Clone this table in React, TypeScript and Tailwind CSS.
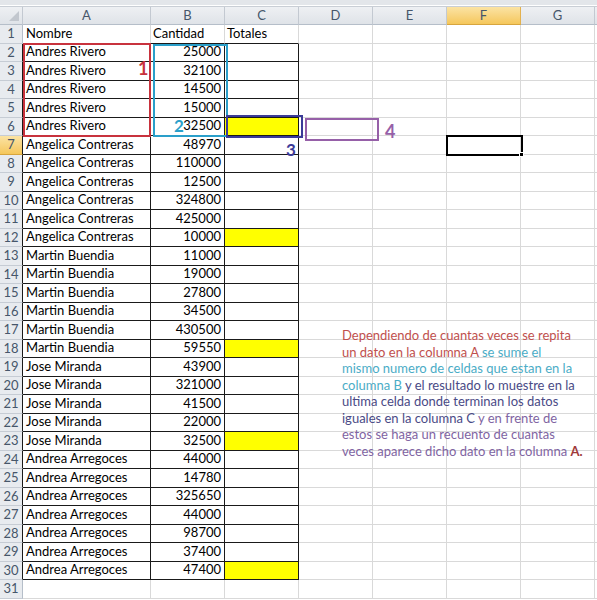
import React from "react";

const data: [string, number][] = [
  ["Andres Rivero", 25000],
  ["Andres Rivero", 32100],
  ["Andres Rivero", 14500],
  ["Andres Rivero", 15000],
  ["Andres Rivero", 32500],
  ["Angelica Contreras", 48970],
  ["Angelica Contreras", 110000],
  ["Angelica Contreras", 12500],
  ["Angelica Contreras", 324800],
  ["Angelica Contreras", 425000],
  ["Angelica Contreras", 10000],
  ["Martin Buendia", 11000],
  ["Martin Buendia", 19000],
  ["Martin Buendia", 27800],
  ["Martin Buendia", 34500],
  ["Martin Buendia", 430500],
  ["Martin Buendia", 59550],
  ["Jose Miranda", 43900],
  ["Jose Miranda", 321000],
  ["Jose Miranda", 41500],
  ["Jose Miranda", 22000],
  ["Jose Miranda", 32500],
  ["Andrea Arregoces", 44000],
  ["Andrea Arregoces", 14780],
  ["Andrea Arregoces", 325650],
  ["Andrea Arregoces", 44000],
  ["Andrea Arregoces", 98700],
  ["Andrea Arregoces", 37400],
  ["Andrea Arregoces", 47400],
];

const yellow = new Set([6, 12, 18, 23, 30]);
const cols = ["A", "B", "C", "D", "E", "F", "G"];

function HeaderRow() {
  return (
    <>
      <div className="flex items-end justify-end pr-[3px] pb-[3px] border-r border-b border-r-[#c3c9d1] border-b-[#b5bec9] bg-linear-to-b from-[#eef0f3] to-[#dfe3e8]">
        <svg width="10" height="10" viewBox="0 0 10 10">
          <polygon points="10,0 10,10 0,10" fill="#c2c7ce" />
        </svg>
      </div>
      {cols.map((c) => (
        <div
          key={c}
          className={
            "flex items-center justify-center border-r border-b text-[13px] text-[#46566a] " +
            (c === "F"
              ? "bg-linear-to-b from-[#fbe3a3] to-[#f5c75a] border-r-[#e3b14f] border-b-[#d7a53e]"
              : "bg-linear-to-b from-[#eef0f3] to-[#dfe3e8] border-r-[#c3c9d1] border-b-[#b5bec9]")
          }
        >
          {c}
        </div>
      ))}
      <div className="border-b border-b-[#b5bec9] bg-linear-to-b from-[#eef0f3] to-[#dfe3e8]" />
    </>
  );
}

function DataRow({ r }: { r: number }) {
  const inData = r >= 2 && r <= 30;
  const item = inData ? data[r - 2] : null;
  const gray = "border-r-[#d9d9d9] border-b-[#d9d9d9]";
  const abcBorder = inData
    ? "border-r-[#1a1a1a] border-b-[#1a1a1a]"
    : r === 1
    ? "border-r-[#d9d9d9] border-b-[#1a1a1a]"
    : gray;
  const active = r === 7;
  const txt = "flex items-end pb-[2px] border-r border-b whitespace-nowrap text-[13px] leading-[15px] text-black ";
  return (
    <>
      <div
        className={
          "flex items-center justify-center border-r border-b text-[13px] text-[#46566a] " +
          (active
            ? "bg-linear-to-b from-[#fbe3a3] to-[#f5c75a] border-b-[#d7a53e] "
            : "bg-[#e8ebef] border-b-[#c6ccd4] ") +
          (inData ? "border-r-[#1a1a1a]" : "border-r-[#b5bec9]")
        }
      >
        {r}
      </div>
      <div className={txt + "pl-[3px] " + abcBorder}>
        {r === 1 ? "Nombre" : item ? item[0] : ""}
      </div>
      <div className={txt + (r === 1 ? "pl-[2px] justify-start " : "pr-[3px] justify-end ") + abcBorder}>
        {r === 1 ? "Cantidad" : item ? String(item[1]) : ""}
      </div>
      <div className={txt + "pl-[2px] " + abcBorder + (yellow.has(r) ? " bg-[#ffff00]" : "")}>
        {r === 1 ? "Totales" : ""}
      </div>
      {[0, 1, 2, 3].map((i) => (
        <div key={i} className={"border-r border-b " + gray} />
      ))}
      <div className="border-b border-b-[#d9d9d9]" />
    </>
  );
}

export default function App() {
  const rows = Array.from({ length: 31 }, (_, i) => i + 1);
  return (
    <div className="relative w-[597px] h-[600px] overflow-hidden bg-white font-['Lato',sans-serif]">
      <div className="h-[5px] bg-[#e3e6ea]" />
      <div className="h-[1px] bg-white" />
      <div className="h-[1px] bg-[#c9ced5]" />
      <div className="grid grid-cols-[23px_128px_74px_74px_74px_74px_74px_74px_1fr] grid-rows-[18px_repeat(31,18.5px)]">
        <HeaderRow />
        {rows.map((r) => (
          <DataRow key={r} r={r} />
        ))}
      </div>

      {/* annotation shapes drawn over the sheet */}
      <div className="absolute left-[23px] top-[43px] w-[128px] h-[94px] border-2 border-[#c8323d]" />
      <div className="absolute left-[138px] top-[58px] text-[18px] leading-[20px] font-bold text-[#c8323d]">1</div>

      <div className="absolute left-[153px] top-[44px] w-[75px] h-[93px] border-2 border-[#2a9fca]" />
      <div className="absolute left-[174px] top-[116px] text-[17px] leading-[20px] font-bold text-[#2a9fca]">2</div>

      <div className="absolute left-[226px] top-[115px] w-[77px] h-[23px] border-2 border-[#3b3b98]" />
      <div className="absolute left-[286px] top-[140px] text-[17px] leading-[20px] font-bold text-[#3b3b98]">3</div>

      <div className="absolute left-[305px] top-[118px] w-[74px] h-[23px] border-2 border-[#9660a8]" />
      <div className="absolute left-[385px] top-[121px] text-[18px] leading-[20px] font-bold text-[#9660a8]">4</div>

      {/* active cell */}
      <div className="absolute left-[446px] top-[135px] w-[77px] h-[21px] border-2 border-black" />
      <div className="absolute left-[519px] top-[152px] w-[5px] h-[5px] bg-black border border-white" />

      {/* note text box */}
      <div className="absolute left-[342px] top-[327px] text-[13px] leading-[16.5px] whitespace-nowrap">
        <div className="text-[#c0504d]">Dependiendo de cuantas veces se repita</div>
        <div>
          <span className="text-[#c0504d]">un dato en la columna A</span>
          <span className="text-[#4bacc6]"> se sume el</span>
        </div>
        <div className="text-[#4bacc6]">mismo numero de celdas que estan en la</div>
        <div>
          <span className="text-[#4bacc6]">columna B</span>
          <span className="text-[#4a4a86]"> y el resultado lo muestre en la</span>
        </div>
        <div className="text-[#4a4a86]">ultima celda donde terminan los datos</div>
        <div>
          <span className="text-[#4a4a86]">iguales en la columna C</span>
          <span className="text-[#8064a2]"> y en frente de</span>
        </div>
        <div className="text-[#8064a2]">estos se haga un recuento de cuantas</div>
        <div>
          <span className="text-[#8064a2]">veces aparece dicho dato en la columna </span>
          <span className="text-[#a0393a] font-bold">A.</span>
        </div>
      </div>
    </div>
  );
}
